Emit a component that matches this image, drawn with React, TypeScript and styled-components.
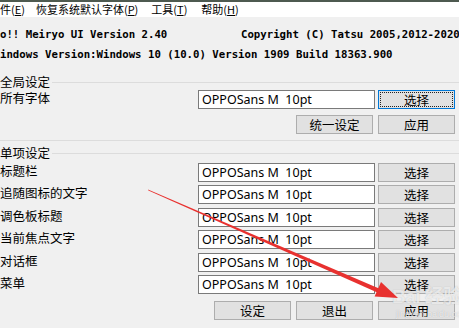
import React from "react";
import styled, { createGlobalStyle } from "styled-components";

const GlobalStyle = createGlobalStyle`
  html, body {
    margin: 0;
    padding: 0;
    background: #f0f0f0;
  }
  body {
    width: 459px;
    height: 328px;
    overflow: hidden;
    font-family: "Noto Sans CJK SC", "Noto Sans", sans-serif;
    color: #000;
  }
`;

const Window = styled.div`
  position: relative;
  width: 459px;
  height: 328px;
  overflow: hidden;
  background: #f0f0f0;
`;

const MenuBar = styled.div`
  height: 15px;
  border-top: 2px solid #4e5a50;
  background: #fff;
  display: flex;
  align-items: center;
  font-size: 11px;
  line-height: 15px;
  white-space: nowrap;
`;

const MenuItem = styled.span<{ $gap: number }>`
  margin-left: ${p => p.$gap}px;
  font-family: "Noto Sans CJK SC", sans-serif;
  u {
    text-decoration: underline;
    text-underline-offset: 1px;
  }
`;

const Header = styled.div`
  margin-top: 8px;
  font-family: "DejaVu Sans Mono", monospace;
  font-weight: bold;
  font-size: 10.7px;
  line-height: 20px;
  white-space: nowrap;
`;

const HeaderRow = styled.div`
  display: flex;
`;

const HeaderLeft = styled.span`
  width: 241px;
  flex: none;
`;

const Group = styled.div<{ $top: number }>`
  margin-top: ${p => p.$top}px;
`;

const GroupHead = styled.div`
  display: flex;
  align-items: center;
  height: 16px;
  font-size: 12.5px;
  line-height: 16px;
`;

const GroupLine = styled.div`
  flex: 1;
  height: 1px;
  background: #dcdcdc;
  margin-left: 2px;
`;

const GroupBody = styled.div<{ $gap: number; $bordered?: boolean }>`
  display: flex;
  flex-direction: column;
  gap: ${p => p.$gap}px;
  padding-bottom: ${p => (p.$bordered ? 6 : 0)}px;
  border-bottom: ${p => (p.$bordered ? "1px solid #dcdcdc" : "none")};
`;

const Row = styled.div<{ $top?: number }>`
  display: flex;
  align-items: flex-start;
  height: 19px;
  padding-right: 4px;
  margin-top: ${p => p.$top ?? 0}px;
`;

const Label = styled.span`
  flex: 1;
  font-size: 12.5px;
  line-height: 15px;
  white-space: nowrap;
`;

const FontBox = styled.div`
  width: 177px;
  height: 19px;
  box-sizing: border-box;
  border: 1px solid #7a7a7a;
  background: #fff;
  padding-left: 3px;
  font-family: "Noto Sans", sans-serif;
  font-size: 12.5px;
  line-height: 17px;
  white-space: pre;
  margin-right: 3px;
`;

const Button = styled.div<{ $focused?: boolean }>`
  width: 77px;
  height: 19px;
  box-sizing: border-box;
  border: 1px solid ${p => (p.$focused ? "#0078d7" : "#adadad")};
  background: #e1e1e1;
  display: flex;
  align-items: center;
  justify-content: center;
  font-size: 12.5px;
  line-height: 17px;
  outline: ${p => (p.$focused ? "1px dotted #222" : "none")};
  outline-offset: -3px;
`;

const ButtonRow = styled.div<{ $top: number }>`
  display: flex;
  justify-content: flex-end;
  gap: 5px;
  padding-right: 4px;
  margin-top: ${p => p.$top}px;
`;

const Overlay = styled.svg`
  position: absolute;
  left: 0;
  top: 0;
  pointer-events: none;
`;

const Watermark = styled.div`
  position: absolute;
  left: 392px;
  top: 286px;
  color: rgba(255, 255, 255, 0.7);
  text-shadow: 0 0 1px rgba(120, 120, 120, 0.45);
  font-family: "Liberation Sans", "Noto Sans CJK SC", sans-serif;
  white-space: nowrap;
  pointer-events: none;
`;

const WatermarkMain = styled.div`
  font-size: 19px;
  font-weight: bold;
  line-height: 22px;
  letter-spacing: -0.5px;
`;

const WatermarkSub = styled.div`
  font-size: 9px;
  line-height: 12px;
  margin-left: 4px;
`;

const items = [
  "标题栏",
  "追随图标的文字",
  "调色板标题",
  "当前焦点文字",
  "对话框",
  "菜单",
];

const FONT = "OPPOSans M  10pt";

const App: React.FC = () => {
  return (
    <Window>
      <GlobalStyle />
      <MenuBar>
        <MenuItem $gap={0}>件(<u>E</u>)</MenuItem>
        <MenuItem $gap={11}>恢复系统默认字体(<u>P</u>)</MenuItem>
        <MenuItem $gap={13}>工具(<u>T</u>)</MenuItem>
        <MenuItem $gap={14}>帮助(<u>H</u>)</MenuItem>
      </MenuBar>

      <Header>
        <HeaderRow>
          <HeaderLeft>o!! Meiryo UI Version 2.40</HeaderLeft>
          <span>Copyright (C) Tatsu 2005,2012-2020</span>
        </HeaderRow>
        <div>indows Version:Windows 10 (10.0) Version 1909 Build 18363.900</div>
      </Header>

      <Group $top={9}>
        <GroupHead>
          全局设定
          <GroupLine />
        </GroupHead>
        <GroupBody $gap={6} $bordered>
          <Row>
            <Label>所有字体</Label>
            <FontBox>{FONT}</FontBox>
            <Button $focused>选择</Button>
          </Row>
          <ButtonRow $top={0}>
            <Button>统一设定</Button>
            <Button>应用</Button>
          </ButtonRow>
        </GroupBody>
      </Group>

      <Group $top={4}>
        <GroupHead>
          单项设定
          <GroupLine />
        </GroupHead>
        <GroupBody $gap={3.5}>
          {items.map((name, i) => (
            <Row key={name} $top={i === 0 ? 1.5 : 0}>
              <Label>{name}</Label>
              <FontBox>{FONT}</FontBox>
              <Button>选择</Button>
            </Row>
          ))}
        </GroupBody>
      </Group>

      <ButtonRow $top={7}>
        <Button>设定</Button>
        <Button>退出</Button>
        <Button>应用</Button>
      </ButtonRow>

      <Watermark>
        <WatermarkMain>Bai 经验</WatermarkMain>
        <WatermarkSub>jingyan.baidu.com</WatermarkSub>
      </Watermark>

      <Overlay width={459} height={328} viewBox="0 0 459 328">
        <polygon
          points="148,189.4 148.4,190.4 379,293.3 380.8,289.2"
          fill="#e8312f"
        />
        <polygon points="398,298 374.6,296.6 381,282" fill="#e8312f" />
      </Overlay>
    </Window>
  );
};

export default App;
